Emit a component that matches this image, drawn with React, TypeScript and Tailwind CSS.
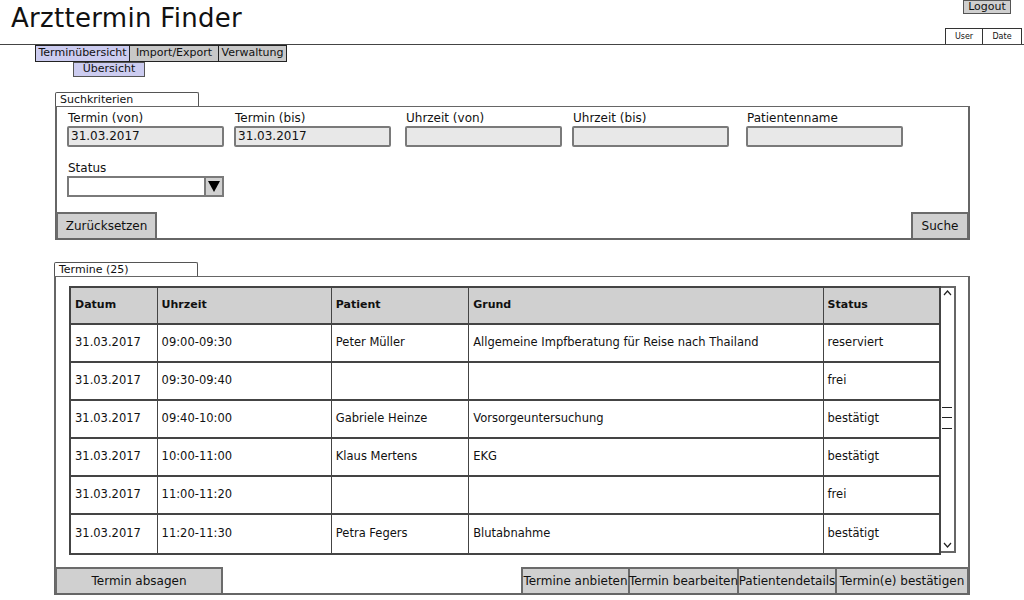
import React from "react";

const rows = [
  { datum: "31.03.2017", zeit: "09:00-09:30", patient: "Peter Müller", grund: "Allgemeine Impfberatung für Reise nach Thailand", status: "reserviert" },
  { datum: "31.03.2017", zeit: "09:30-09:40", patient: "", grund: "", status: "frei" },
  { datum: "31.03.2017", zeit: "09:40-10:00", patient: "Gabriele Heinze", grund: "Vorsorgeuntersuchung", status: "bestätigt" },
  { datum: "31.03.2017", zeit: "10:00-11:00", patient: "Klaus Mertens", grund: "EKG", status: "bestätigt" },
  { datum: "31.03.2017", zeit: "11:00-11:20", patient: "", grund: "", status: "frei" },
  { datum: "31.03.2017", zeit: "11:20-11:30", patient: "Petra Fegers", grund: "Blutabnahme", status: "bestätigt" },
];

const cols = ["w-[87px]", "w-[175px]", "w-[138px]", "w-[356px]", "w-[116px]"];

function Field({ label, value, ml }: { label: string; value?: string; ml: string }) {
  return (
    <div className={`${ml} flex w-[157px] flex-col`}>
      <span className="h-[16px] pl-[1px] text-[12px] leading-[16px]">{label}</span>
      <div className="h-[21px] rounded-[2px] border-2 border-[#7a7a7a] bg-[#e8e8e8] px-[2px] text-[12px] leading-[17px]">
        {value}
      </div>
    </div>
  );
}

function Btn({ children, className }: { children: React.ReactNode; className: string }) {
  return (
    <div className={`flex h-[26px] items-center justify-center whitespace-nowrap border-2 border-[#6b6b6b] bg-[#d0d0d0] text-[12px] ${className}`}>
      {children}
    </div>
  );
}

export default function App() {
  return (
    <div
      className="relative h-[600px] w-[1024px] overflow-hidden bg-white text-[#111]"
      style={{ fontFamily: '"DejaVu Sans", "Liberation Sans", sans-serif' }}
    >
      {/* Kopfzeile */}
      <div className="flex h-[45px] justify-between border-b border-[#444]">
        <h1 className="pl-[11px] pt-[2px] text-[26px] leading-[32px] tracking-[0.3px]">Arzttermin Finder</h1>
        <div className="flex flex-col items-end">
          <div className="mr-[13px] flex h-[14px] w-[48px] items-center justify-center border border-[#555] bg-[#cfcfcf] text-[11px]">
            Logout
          </div>
          <div className="mr-[2px] mt-[14px] flex">
            <div className="flex h-[16px] w-[38px] items-center justify-center border border-b-0 border-[#333] text-[8px]">User</div>
            <div className="flex h-[16px] w-[39px] items-center justify-center border border-b-0 border-l-0 border-[#333] text-[8px]">Date</div>
          </div>
        </div>
      </div>

      {/* Navigation */}
      <div className="flex pl-[35px] text-[11px]">
        <div className="flex h-[17px] w-[95px] items-center justify-center border border-[#222] bg-[#ccccf0]">Terminübersicht</div>
        <div className="flex h-[17px] w-[89px] items-center justify-center border border-l-0 border-[#222] bg-[#c8c8c8]">Import/Export</div>
        <div className="flex h-[17px] w-[68px] items-center justify-center border border-l-0 border-[#222] bg-[#c8c8c8]">Verwaltung</div>
      </div>
      <div className="flex pl-[73px] text-[11px]">
        <div className="flex h-[15px] w-[72px] items-center justify-center border border-[#555] bg-[#ccccf0]">Übersicht</div>
      </div>

      {/* Suchkriterien */}
      <div className="ml-[55px] mt-[15px] w-[915px]">
        <div className="h-[14px] w-[144px] rounded-t-[2px] border border-b-0 border-[#555] pl-[4px] text-[11px] leading-[13px]">
          Suchkriterien
        </div>
        <div className="flex h-[134px] flex-col border-2 border-[#666] border-t-[1.5px]">
          <div className="flex pt-[3px] pl-[10px]">
            <Field label="Termin (von)" value="31.03.2017" ml="ml-0" />
            <Field label="Termin (bis)" value="31.03.2017" ml="ml-[10px]" />
            <Field label="Uhrzeit (von)" ml="ml-[14px]" />
            <Field label="Uhrzeit (bis)" ml="ml-[10px]" />
            <Field label="Patientenname" ml="ml-[17px]" />
          </div>
          <div className="mt-[13px] flex w-[157px] flex-col pl-[10px]">
            <span className="h-[16px] pl-[1px] text-[12px] leading-[16px]">Status</span>
            <div className="flex h-[21px] w-[157px] border-2 border-[#7a7a7a]">
              <div className="flex-1 bg-white" />
              <div className="flex w-[18px] items-center justify-center border-l-2 border-[#7a7a7a] bg-[#d0d0d0]">
                <svg width="12" height="11" viewBox="0 0 12 11">
                  <path d="M0 0 L12 0 L6 11 Z" fill="#000" />
                </svg>
              </div>
            </div>
          </div>
          <div className="mt-auto flex justify-between">
            <Btn className="-ml-[1px] w-[101px] border-b-0">Zurücksetzen</Btn>
            <Btn className="-mr-[1px] w-[58px] border-b-0">Suche</Btn>
          </div>
        </div>
      </div>

      {/* Termine */}
      <div className="ml-[54px] mt-[22px] w-[916px]">
        <div className="h-[14px] w-[144px] rounded-t-[2px] border border-b-0 border-[#555] pl-[4px] text-[11px] leading-[13px]">
          Termine (25)
        </div>
        <div className="flex h-[319px] flex-col border-2 border-[#666] border-t-[1.5px]">
          <div className="ml-[13px] mt-[9px] flex">
            <div className="w-[872px] border-2 border-[#444]">
              <div className="flex h-[37px] border-b-2 border-[#444] bg-[#d0d0d0] text-[11px] font-bold">
                {["Datum", "Uhrzeit", "Patient", "Grund", "Status"].map((h, i) => (
                  <div key={h} className={`${cols[i]} flex items-center pl-[4px] ${i < 4 ? "border-r border-[#444]" : ""}`}>
                    {h}
                  </div>
                ))}
              </div>
              {rows.map((r, ri) => (
                <div key={ri} className={`flex h-[38px] text-[11.5px] ${ri < rows.length - 1 ? "border-b-2 border-[#444]" : ""}`}>
                  {[r.datum, r.zeit, r.patient, r.grund, r.status].map((c, i) => (
                    <div key={i} className={`${cols[i]} flex items-center whitespace-nowrap pl-[4px] ${i < 4 ? "border-r border-[#444]" : ""}`}>
                      {c}
                    </div>
                  ))}
                </div>
              ))}
            </div>
            <div className="relative h-[267px] w-[15px] border-2 border-l-0 border-[#666]">
              <svg className="absolute left-[2px] top-[2px]" width="9" height="6" viewBox="0 0 9 6">
                <path d="M1 5 L4.5 1 L8 5" stroke="#222" fill="none" strokeWidth="1.2" />
              </svg>
              <div className="absolute left-[1px] top-[119px] h-[22px] w-[10px] border-y border-[#222]">
                <div className="mt-[9px] h-[1px] w-[10px] bg-[#222]" />
              </div>
              <svg className="absolute bottom-[3px] left-[2px]" width="9" height="6" viewBox="0 0 9 6">
                <path d="M1 1 L4.5 5 L8 1" stroke="#222" fill="none" strokeWidth="1.2" />
              </svg>
            </div>
          </div>
          <div className="mt-auto flex">
            <Btn className="-ml-[1px] w-[168px] border-b-0">Termin absagen</Btn>
            <div className="flex-1" />
            <Btn className="w-[109px] border-b-0 text-[11px]">Termine anbieten</Btn>
            <Btn className="w-[109px] border-b-0 border-l-0 text-[11px]">Termin bearbeiten</Btn>
            <Btn className="w-[98px] border-b-0 border-l-0 text-[11px]">Patientendetails</Btn>
            <Btn className="-mr-[1px] w-[132px] border-b-0 border-l-0">Termin(e) bestätigen</Btn>
          </div>
        </div>
      </div>
    </div>
  );
}
